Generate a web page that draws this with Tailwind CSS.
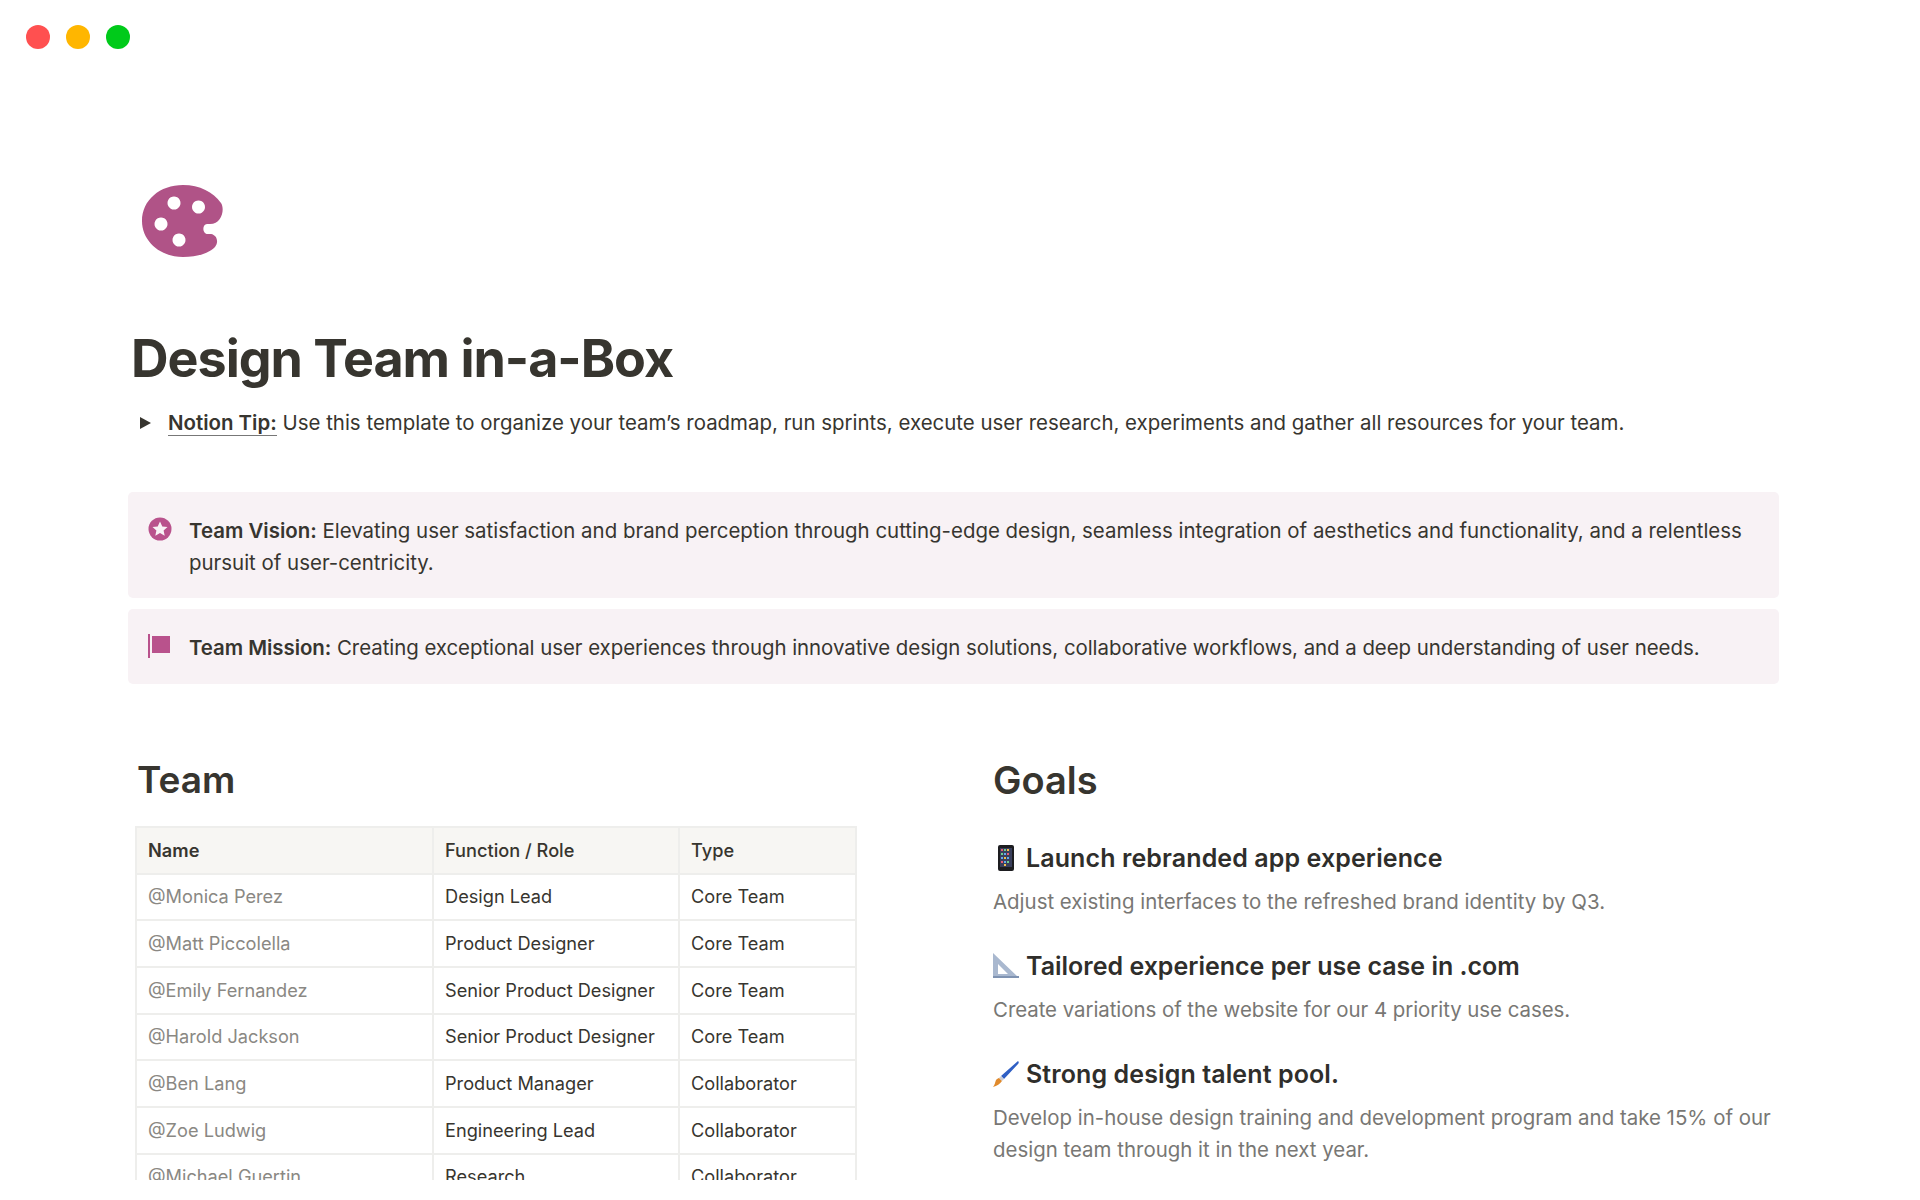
<!DOCTYPE html>
<html lang="en">
<head>
    <meta charset="UTF-8">
    <title>Design Team in-a-Box</title>
    <script src="https://cdn.jsdelivr.net/npm/@tailwindcss/browser@4"></script>
</head>
<body class="bg-white font-['Inter',sans-serif] text-[#37352f]">
    <div class="h-[1200px] w-[1920px] overflow-hidden">
        <div class="h-[1180px] overflow-hidden">
            <div class="flex gap-4 pt-[25px] pl-[26px]">
                <span class="w-6 h-6 rounded-full bg-[#ff5050]"></span>
                <span class="w-6 h-6 rounded-full bg-[#ffb600]"></span>
                <span class="w-6 h-6 rounded-full bg-[#00ca1a]"></span>
            </div>

            <div class="pl-[142px] pt-[136px]">
                <svg class="block w-[81px] h-[72px]" viewBox="0 0 81 72">
                    <path fill="#b05387" fill-rule="evenodd" d="M41 0C58 0 71 7 79 18C83 24 80 39 68 39L65 39C60 39 60 49 66 49L69 49C75 50 77 57 73 62C66 69 54 72 41 72C18 72 0 56 0 36C0 15 18 0 41 0ZM32 11.500a6.500 6.500 0 1 0 .01 0ZM56.500 15.500a6.500 6.500 0 1 0 .01 0ZM19 32.500a6.500 6.500 0 1 0 .01 0ZM37 48.500a6.500 6.500 0 1 0 .01 0Z"/>
                </svg>
            </div>

            <h1 class="pl-[131px] mt-[73px] text-[52px] leading-[58px] font-bold tracking-[-1px]">Design Team in-a-Box</h1>

            <div class="flex items-center pl-[140px] mt-[19px] h-8 text-[20.45px]">
                <svg class="w-[11px] h-3 mr-[17px]" viewBox="0 0 11 12"><path fill="#37352f" d="M0 0l11 6-11 6z"/></svg>
                <p><span class="font-semibold border-b border-[#777]">Notion Tip:</span> Use this template to organize your team’s roadmap, run sprints, execute user research, experiments and gather all resources for your team.</p>
            </div>

            <div class="mx-[128px] w-[1651px] mt-[53px] flex flex-col gap-[11px] text-[20.45px] leading-8">
                <div class="flex bg-[#f8f2f5] rounded-[5px] pt-[23px] pb-[19px] pl-[20px] pr-[30px]">
                    <svg class="shrink-0 mt-[2px] w-6 h-6 mr-[17px]" viewBox="0 0 24 24">
                        <circle cx="12" cy="12" r="11.500" fill="#b9528c"/>
                        <path fill="#f8f2f5" d="M12 4.500l2.300 4.900 5.200.6-3.900 3.600 1.100 5.200-4.700-2.700-4.700 2.700 1.100-5.200L4.500 10l5.200-.6z"/>
                    </svg>
                    <p><span class="font-semibold">Team Vision:</span> Elevating user satisfaction and brand perception through cutting-edge design, seamless integration of aesthetics and functionality, and a relentless pursuit of user-centricity.</p>
                </div>
                <div class="flex bg-[#f8f2f5] rounded-[5px] pt-[23px] pb-[20px] pl-[20px] pr-[30px]">
                    <svg class="shrink-0 mt-[2px] w-6 h-6 mr-[17px]" viewBox="0 0 24 24">
                        <path fill="#b9528c" d="M0 0h2v25H0zM4 2h18v17H4z"/>
                    </svg>
                    <p class="tracking-[-0.05px]"><span class="font-semibold">Team Mission:</span> Creating exceptional user experiences through innovative design solutions, collaborative workflows, and a deep understanding of user needs.</p>
                </div>
            </div>

            <div class="flex mt-[72px]">
                <div class="w-[858px] pl-[135px] shrink-0">
                    <h2 class="pl-[2px] text-[37px] leading-[48px] font-semibold">Team</h2>
                    <table class="mt-[22px] w-[720px] table-fixed border-collapse text-[18.200px] text-[#37352f]">
                        <colgroup><col class="w-[297px]"><col class="w-[246px]"><col class="w-[177px]"></colgroup>
                        <tbody>
                            <tr class="h-[46.670px] bg-[#f7f6f3] font-medium">
                                <td class="border-2 border-[#eeeeec] px-[11px] font-semibold">Name</td>
                                <td class="border-2 border-[#eeeeec] px-[11px]">Function / Role</td>
                                <td class="border-2 border-[#eeeeec] px-[11px]">Type</td>
                            </tr>
                            <tr class="h-[46.670px]"><td class="border-2 border-[#eeeeec] px-[11px] text-[#8a8883]">@Monica Perez</td><td class="border-2 border-[#eeeeec] px-[11px]">Design Lead</td><td class="border-2 border-[#eeeeec] px-[11px]">Core Team</td></tr>
                            <tr class="h-[46.670px]"><td class="border-2 border-[#eeeeec] px-[11px] text-[#8a8883]">@Matt Piccolella</td><td class="border-2 border-[#eeeeec] px-[11px]">Product Designer</td><td class="border-2 border-[#eeeeec] px-[11px]">Core Team</td></tr>
                            <tr class="h-[46.670px]"><td class="border-2 border-[#eeeeec] px-[11px] text-[#8a8883]">@Emily Fernandez</td><td class="border-2 border-[#eeeeec] px-[11px]">Senior Product Designer</td><td class="border-2 border-[#eeeeec] px-[11px]">Core Team</td></tr>
                            <tr class="h-[46.670px]"><td class="border-2 border-[#eeeeec] px-[11px] text-[#8a8883]">@Harold Jackson</td><td class="border-2 border-[#eeeeec] px-[11px]">Senior Product Designer</td><td class="border-2 border-[#eeeeec] px-[11px]">Core Team</td></tr>
                            <tr class="h-[46.670px]"><td class="border-2 border-[#eeeeec] px-[11px] text-[#8a8883]">@Ben Lang</td><td class="border-2 border-[#eeeeec] px-[11px]">Product Manager</td><td class="border-2 border-[#eeeeec] px-[11px]">Collaborator</td></tr>
                            <tr class="h-[46.670px]"><td class="border-2 border-[#eeeeec] px-[11px] text-[#8a8883]">@Zoe Ludwig</td><td class="border-2 border-[#eeeeec] px-[11px]">Engineering Lead</td><td class="border-2 border-[#eeeeec] px-[11px]">Collaborator</td></tr>
                            <tr class="h-[46.670px]"><td class="border-2 border-[#eeeeec] px-[11px] text-[#8a8883]">@Michael Guertin</td><td class="border-2 border-[#eeeeec] px-[11px]">Research</td><td class="border-2 border-[#eeeeec] px-[11px]">Collaborator</td></tr>
                        </tbody>
                    </table>
                </div>

                <div class="ml-[135px] w-[790px] shrink-0">
                    <h2 class="text-[38px] leading-[48px] font-semibold">Goals</h2>

                    <h3 class="flex items-center mt-[34px] text-[25px] leading-[40px] font-semibold text-[#2f2e2b] tracking-[0.1px]">
                        <svg class="w-[26px] h-[26px] mr-[7px]" viewBox="0 0 26 26">
                            <rect x="5" y="0" width="16" height="26" rx="2" fill="#1d1d20"/>
                            <rect x="7" y="3" width="12" height="19" fill="#3a3f5c"/>
                            <path fill="#e85d75" d="M8 4h2v2H8zM14 8h2v2h-2zM8 16h2v2H8z"/>
                            <path fill="#6fd08c" d="M11 4h2v2h-2zM8 8h2v2H8zM14 16h2v2h-2z"/>
                            <path fill="#f4c04e" d="M14 4h2v2h-2zM11 12h2v2h-2zM11 19h2v2h-2z"/>
                            <path fill="#63a8f0" d="M11 8h2v2h-2zM8 12h2v2H8zM14 12h2v2h-2zM11 16h2v2h-2z"/>
                        </svg>
                        Launch rebranded app experience
                    </h3>
                    <p class="mt-[8px] text-[20.45px] leading-8 text-[#787774]">Adjust existing interfaces to the refreshed brand identity by Q3.</p>

                    <h3 class="flex items-center mt-[28px] text-[25px] leading-[40px] font-semibold text-[#2f2e2b]">
                        <svg class="w-[26px] h-[26px] mr-[7px]" viewBox="0 0 26 26">
                            <path fill-rule="evenodd" fill="#a9b8cf" d="M0 0l26 25H0zM5 11v10h10z"/>
                            <path fill="#7f93b2" d="M0 23h26v2H0z"/>
                        </svg>
                        Tailored experience per use case in .com
                    </h3>
                    <p class="mt-[8px] text-[20.45px] leading-8 text-[#787774] tracking-[-0.05px]">Create variations of the website for our 4 priority use cases.</p>

                    <h3 class="flex items-center mt-[28px] text-[25px] leading-[40px] font-semibold text-[#2f2e2b] tracking-[0.1px]">
                        <svg class="w-[26px] h-[26px] mr-[7px]" viewBox="0 0 26 26">
                            <path fill="#2f5fc4" d="M25 0c1 1 1 2 0 3L11 18l-3-3z"/>
                            <path fill="#c9ccd3" d="M8 15l3 3-2 2-3-3z"/>
                            <path fill="#e08a2c" d="M6 17l3 3c-2 3-5 5-9 6 2-2 2-5 3-7 1-1 2-2 3-2z"/>
                        </svg>
                        Strong design talent pool.
                    </h3>
                    <p class="mt-[8px] text-[20.45px] leading-8 text-[#787774]">Develop in-house design training and development program and take 15% of our design team through it in the next year.</p>
                </div>
            </div>
        </div>
    </div>
</body>
</html>
